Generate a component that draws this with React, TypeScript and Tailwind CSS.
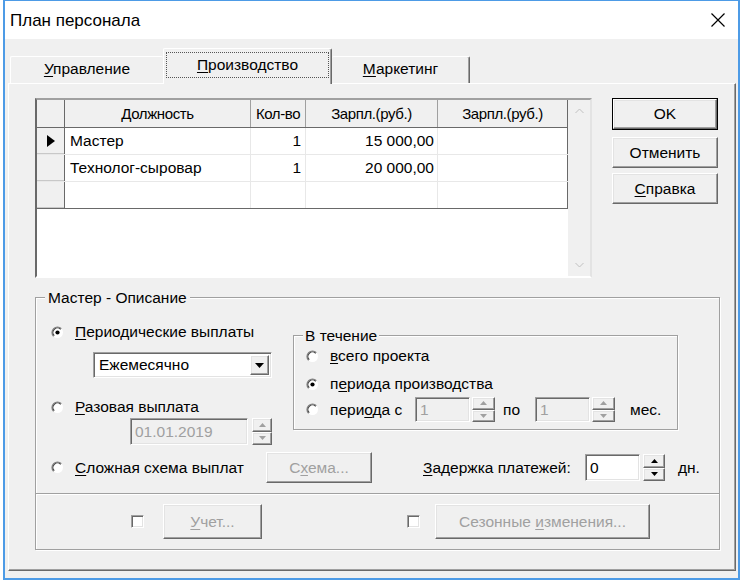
import React from 'react'

const raised =
  'border border-t-white border-l-white border-r-[#696969] border-b-[#696969] shadow-[inset_-1px_-1px_0_#a0a0a0,inset_1px_1px_0_#e3e3e3]'
const sunken =
  'border border-t-[#a0a0a0] border-l-[#a0a0a0] border-r-white border-b-white shadow-[inset_1px_1px_0_#696969,inset_-1px_-1px_0_#e3e3e3]'
const etched = 'border border-[#a0a0a0] shadow-[inset_1px_1px_0_#fff,1px_1px_0_#fff]'

function Btn({
  children,
  className = '',
  disabled = false,
  isDefault = false,
}: {
  children: React.ReactNode
  className?: string
  disabled?: boolean
  isDefault?: boolean
}) {
  const inner = (
    <div
      className={`flex h-full w-full items-center justify-center bg-[#f0f0f0] ${raised} ${
        disabled ? 'text-[#a0a0a0]' : 'text-black'
      }`}
    >
      {children}
    </div>
  )
  return <div className={`${isDefault ? 'border border-black' : ''} ${className}`}>{inner}</div>
}

function Spin({ disabled = false, className = '' }: { disabled?: boolean; className?: string }) {
  const c = disabled ? '#a0a0a0' : '#000'
  return (
    <div className={`flex flex-col ${className}`}>
      <div className={`flex flex-1 items-center justify-center bg-[#f0f0f0] ${raised}`}>
        <svg width="7" height="4" viewBox="0 0 7 4">
          <path d="M0 4L3.5 0L7 4Z" fill={c} />
        </svg>
      </div>
      <div className={`flex flex-1 items-center justify-center bg-[#f0f0f0] ${raised}`}>
        <svg width="7" height="4" viewBox="0 0 7 4">
          <path d="M0 0L3.5 4L7 0Z" fill={c} />
        </svg>
      </div>
    </div>
  )
}

function Field({ value, disabled = false, className = '' }: { value: string; disabled?: boolean; className?: string }) {
  return (
    <div
      className={`flex items-center pl-[4px] ${sunken} ${
        disabled ? 'bg-[#f0f0f0] text-[#a0a0a0]' : 'bg-white text-black'
      } ${className}`}
    >
      {value}
    </div>
  )
}

function Radio({ checked = false }: { checked?: boolean }) {
  return (
    <svg width="13" height="13" viewBox="0 0 13 13" className="shrink-0">
      <circle cx="6.5" cy="6.5" r="5.5" fill="#fff" />
      <path d="M10.4 2.6A5.5 5.5 0 0 0 2.6 10.4" stroke="#808080" strokeWidth="1.2" fill="none" />
      <path d="M9.7 3.3A4.5 4.5 0 0 0 3.3 9.7" stroke="#404040" strokeWidth="1.1" fill="none" />
      {checked && <circle cx="6.5" cy="6.5" r="2.1" fill="#000" />}
    </svg>
  )
}

function Check() {
  return <div className={`h-[13px] w-[13px] shrink-0 bg-white ${sunken}`} />
}

const cols = [
  { w: 'w-[186px]' },
  { w: 'w-[55px]' },
  { w: 'w-[132px]' },
  { w: 'w-[130px]' },
]

const rows = [
  { name: 'Мастер', qty: '1', pay: '15 000,00', current: true },
  { name: 'Технолог-сыровар', qty: '1', pay: '20 000,00', current: false },
  { name: '', qty: '', pay: '', current: false },
]

function StaffGrid() {
  return (
    <div className={`flex h-[180px] w-[557px] border-2 border-t-[#a0a0a0] border-l-[#696969] border-r-[#e3e3e3] border-b-white bg-white`}>
      <div className="flex w-[531px] flex-col">
        <div className="flex h-[28px] border-b border-[#696969] bg-[#f0f0f0] text-[15px] tracking-[-0.4px]">
          <div className="w-[28px] border-r border-[#696969]" />
          <div className={`${cols[0].w} flex items-center justify-center border-r border-[#a0a0a0]`}>Должность</div>
          <div className={`${cols[1].w} flex items-center justify-center border-r border-[#a0a0a0]`}>Кол-во</div>
          <div className={`${cols[2].w} flex items-center justify-center border-r border-[#a0a0a0]`}>Зарпл.(руб.)</div>
          <div className={`${cols[3].w} flex items-center justify-center border-r border-[#696969]`}>Зарпл.(руб.)</div>
        </div>
        {rows.map((r, i) => (
          <div
            key={i}
            className={`flex h-[27px] ${i === rows.length - 1 ? 'border-b border-[#696969]' : 'border-b border-[#e8e8e8]'}`}
          >
            <div className="flex w-[28px] items-center justify-center border-r border-[#696969] bg-[#f0f0f0] shadow-[inset_0_-1px_0_#c8c8c8]">
              {r.current && (
                <svg width="8" height="12" viewBox="0 0 8 12">
                  <path d="M0 0L8 6L0 12Z" fill="#000" />
                </svg>
              )}
            </div>
            <div className={`${cols[0].w} flex items-center border-r border-[#e8e8e8] pl-[5px]`}>{r.name}</div>
            <div className={`${cols[1].w} flex items-center justify-end border-r border-[#e8e8e8] pr-[4px]`}>{r.qty}</div>
            <div className={`${cols[2].w} flex items-center justify-end border-r border-[#e8e8e8] pr-[3px]`}>{r.pay}</div>
            <div className={`${cols[3].w} border-r border-[#696969]`} />
          </div>
        ))}
      </div>
      <div className="flex w-[22px] flex-col items-center justify-between bg-[#f0f0f0] py-[8px]">
        <svg width="9" height="6" viewBox="0 0 9 6">
          <path d="M0.5 5L4.5 1L8.5 5" stroke="#c0c0c0" fill="none" />
        </svg>
        <svg width="9" height="6" viewBox="0 0 9 6">
          <path d="M0.5 1L4.5 5L8.5 1" stroke="#c0c0c0" fill="none" />
        </svg>
      </div>
    </div>
  )
}

export default function App() {
  return (
    <div className="h-[582px] w-[741px] bg-white pl-[3px] font-['Liberation_Sans',Arial,sans-serif] text-[15.5px] leading-none text-black">
      <div className="flex h-[580px] w-[737px] flex-col border-2 border-t border-[#4d9be6]">
        <div className="flex h-[38px] shrink-0 items-center justify-between bg-white pl-[5px] pr-[12px]">
          <span className="text-[17px]">План персонала</span>
          <svg width="16" height="16" viewBox="0 0 16 16">
            <path d="M1.5 1.5L14.5 14.5M14.5 1.5L1.5 14.5" stroke="#000" strokeWidth="1.2" />
          </svg>
        </div>

        <div className="flex flex-1 flex-col bg-[#f0f0f0] pb-[7px] pl-[3px] pr-[2px] pt-[9px]">
          {/* tabs */}
          <div className="flex h-[35px] shrink-0 items-end pl-[2px]">
            <div className="flex h-[27px] w-[153px] items-center justify-center rounded-t-[2px] border-l border-t border-white border-r-0 pb-[3px]">
              <span>
                <u className="underline-offset-2">У</u>правление
              </span>
            </div>
            <div className="relative z-10 -mb-px flex h-[36px] w-[169px] items-start rounded-t-[2px] border-l border-r border-t border-l-white border-r-[#696969] border-t-white bg-[#f0f0f0] px-[2px] pt-[3px] shadow-[inset_-1px_0_0_#a0a0a0]">
              <div className="flex h-[26px] w-full items-center justify-center border border-dotted border-[#555]">
                <span>
                  <u className="underline-offset-2">П</u>роизводство
                </span>
              </div>
            </div>
            <div className="flex h-[27px] w-[138px] items-center justify-center rounded-t-[2px] border-r border-t border-r-[#696969] border-t-white pb-[3px] shadow-[inset_-1px_0_0_#a0a0a0]">
              <span>
                <u className="underline-offset-2">М</u>аркетинг
              </span>
            </div>
          </div>

          {/* tab page */}
          <div className="flex-1 border border-b-[#696969] border-l-white border-r-[#696969] border-t-white pl-[26px] pt-[14px] shadow-[inset_-1px_-1px_0_#a0a0a0]">
            <div className="flex">
              <StaffGrid />
              <div className="ml-[20px] flex w-[106px] flex-col">
                <Btn isDefault className="h-[32px]">
                  OK
                </Btn>
                <Btn className="mt-[7px] h-[31px]">Отменить</Btn>
                <Btn className="mt-[5px] h-[31px]">
                  <span>
                    <u className="underline-offset-2">С</u>правка
                  </span>
                </Btn>
              </div>
            </div>

            {/* master group */}
            <div className={`relative mt-[19px] h-[253px] w-[685px] ${etched}`}>
              <span className="absolute -top-[8px] left-[9px] bg-[#f0f0f0] px-[3px]">Мастер - Описание</span>

              <div className="pl-[15px]">
                <div className="flex">
                  <div className="flex w-[242px] flex-col">
                    <div className="mt-[24px] flex h-[20px] items-center gap-[11px]">
                      <Radio checked />
                      <span>
                        <u className="underline-offset-2">П</u>ериодические выплаты
                      </span>
                    </div>
                    <div className={`ml-[42px] mt-[10px] flex h-[26px] w-[179px] items-center bg-white pl-[5px] pr-[2px] ${sunken}`}>
                      <span className="flex-1">Ежемесячно</span>
                      <div className={`flex h-[20px] w-[19px] items-center justify-center bg-[#f0f0f0] ${raised}`}>
                        <svg width="9" height="5" viewBox="0 0 9 5">
                          <path d="M0 0L4.5 5L9 0Z" fill="#000" />
                        </svg>
                      </div>
                    </div>
                    <div className="mt-[19px] flex h-[20px] items-center gap-[11px]">
                      <Radio />
                      <span>
                        <u className="underline-offset-2">Р</u>азовая выплата
                      </span>
                    </div>
                    <div className="ml-[79px] mt-[1px] flex h-[27px]">
                      <Field value="01.01.2019" disabled className="w-[118px]" />
                      <Spin disabled className="ml-[4px] w-[20px]" />
                    </div>
                  </div>

                  <div className={`relative mt-[37px] h-[95px] w-[385px] ${etched}`}>
                    <span className="absolute -top-[8px] left-[9px] bg-[#f0f0f0] px-[2px]">В течение</span>
                    <div className="flex flex-col pl-[12px]">
                      <div className="mt-[9px] flex h-[22px] items-center gap-[11px]">
                        <Radio />
                        <span>
                          <u className="underline-offset-2">в</u>сего проекта
                        </span>
                      </div>
                      <div className="mt-[6px] flex h-[22px] items-center gap-[11px]">
                        <Radio checked />
                        <span>
                          п<u className="underline-offset-2">е</u>риода производства
                        </span>
                      </div>
                      <div className="mt-[2px] flex h-[25px] items-center">
                        <Radio />
                        <span className="ml-[11px] w-[85px]">
                          пери<u className="underline-offset-2">о</u>да с
                        </span>
                        <Field value="1" disabled className="h-[25px] w-[55px]" />
                        <Spin disabled className="ml-[2px] h-[25px] w-[23px]" />
                        <span className="ml-[8px] w-[32px]">по</span>
                        <Field value="1" disabled className="h-[25px] w-[55px]" />
                        <Spin disabled className="ml-[2px] h-[25px] w-[23px]" />
                        <span className="ml-[15px]">мес.</span>
                      </div>
                    </div>
                  </div>
                </div>

                <div className="mt-[7px] flex h-[31px] items-center">
                  <div className="flex w-[215px] items-center gap-[11px]">
                    <Radio />
                    <span>
                      <u className="underline-offset-2">С</u>ложная схема выплат
                    </span>
                  </div>
                  <Btn disabled className="h-[31px] w-[106px]">
                    <span>
                      С<u className="underline-offset-2">х</u>ема...
                    </span>
                  </Btn>
                  <span className="ml-[51px] w-[162px]">
                    <u className="underline-offset-2">З</u>адержка платежей:
                  </span>
                  <Field value="0" className="h-[27px] w-[55px]" />
                  <Spin className="ml-[3px] h-[27px] w-[22px]" />
                  <span className="ml-[13px]">дн.</span>
                </div>
              </div>

              <div className="mt-[10px] h-0 border-t border-[#a0a0a0] shadow-[0_1px_0_#fff]" />

              <div className="mt-[10px] flex h-[35px] items-center pl-[95px]">
                <Check />
                <Btn disabled className="ml-[19px] h-[35px] w-[99px]">
                  <span>
                    <u className="underline-offset-2">У</u>чет...
                  </span>
                </Btn>
                <div className="ml-[145px]">
                  <Check />
                </div>
                <Btn disabled className="ml-[15px] h-[35px] w-[215px]">
                  <span>
                    Сезонные <u className="underline-offset-2">и</u>зменения...
                  </span>
                </Btn>
              </div>
            </div>
          </div>
        </div>
      </div>
    </div>
  )
}
